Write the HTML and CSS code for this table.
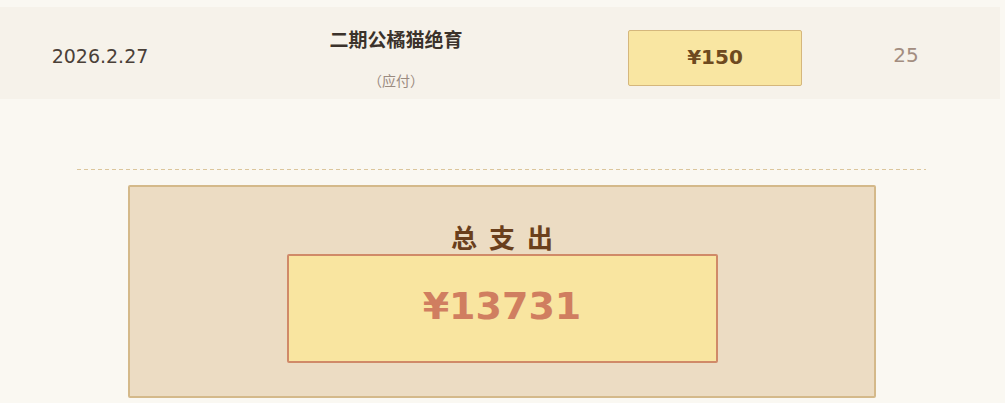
FILE: index.html
```html
<!DOCTYPE html>
<html lang="zh-CN">
<head>
	<meta charset="utf-8">
	<title>支出记录</title>
	<link rel="stylesheet" href="styles.css">
</head>
<body>
	<div class="row">
		<div class="date">2026.2.27</div>
		<div class="item">
			<div class="item-name">二期公橘猫绝育</div>
			<div class="item-note">（应付）</div>
		</div>
		<div class="cost"><span class="cost-box">¥150</span></div>
		<div class="count">25</div>
	</div>

	<div class="summary">
		<div class="total">
			<h2 class="total-title">总支出</h2>
			<div class="total-box">¥13731</div>
		</div>
	</div>
</body>
</html>
```

FILE: styles.css
```css
* {
	margin: 0;
	padding: 0;
	box-sizing: border-box;
}
body {
	background-color: #faf8f2;
	font-family: "DejaVu Sans", "Noto Sans CJK SC", sans-serif;
	color: #4a4038;
}
.row {
	display: grid;
	grid-template-columns: 198px 396px 242px 140px;
	align-items: center;
	width: 1000px;
	height: 92px;
	margin-top: 7px;
	padding-top: 10px;
	background-color: #f6f2ea;
}
.date {
	font-size: 19px;
	line-height: 24px;
	text-align: center;
	margin-bottom: 4px;
	padding-left: 2px;
}
.item {
	display: flex;
	flex-direction: column;
	align-items: center;
	gap: 20px;
}
.item-name {
	font-family: "Noto Sans CJK SC", sans-serif;
	font-size: 19px;
	font-weight: bold;
	line-height: 24px;
	color: #3b322b;
}
.item-note {
	font-family: "Noto Sans CJK SC", sans-serif;
	font-size: 14px;
	line-height: 19px;
	color: #9b8b80;
}
.cost {
	padding: 0 34px;
}
.cost-box {
	display: flex;
	align-items: center;
	justify-content: center;
	height: 56px;
	padding-bottom: 2px;
	border: 1px solid #d5b77c;
	border-radius: 2px;
	background-color: #f9e6a2;
	font-size: 20px;
	font-weight: bold;
	color: #6e4a1f;
}
.count {
	font-size: 20px;
	line-height: 24px;
	text-align: center;
	color: #a38d80;
	margin-bottom: 6px;
}
/* 虚线分隔 */
.summary {
	width: 849px;
	margin: 70px 0 0 77px;
	padding-top: 16px;
	background: repeating-linear-gradient(to right, #dcc69c 0 4px, transparent 4px 7px) top left / 100% 1px no-repeat;
}
.total {
	margin: 0 50px 0 51px;
	padding: 33px 0 33px;
	border: 2px solid #d4b98a;
	border-radius: 2px;
	background-color: #ecdcc3;
	text-align: center;
}
.total-title {
	font-family: "Noto Sans CJK SC", sans-serif;
	font-size: 26px;
	line-height: 34px;
	letter-spacing: 12px;
	padding-left: 12px;
	color: #6a3f1c;
}
.total-box {
	display: flex;
	align-items: center;
	justify-content: center;
	width: 431px;
	height: 109px;
	margin: 0 auto;
	padding-bottom: 5px;
	border: 2px solid #d08a68;
	border-radius: 2px;
	background-color: #f9e5a0;
	font-size: 38px;
	font-weight: bold;
	color: #d07e60;
}
```
